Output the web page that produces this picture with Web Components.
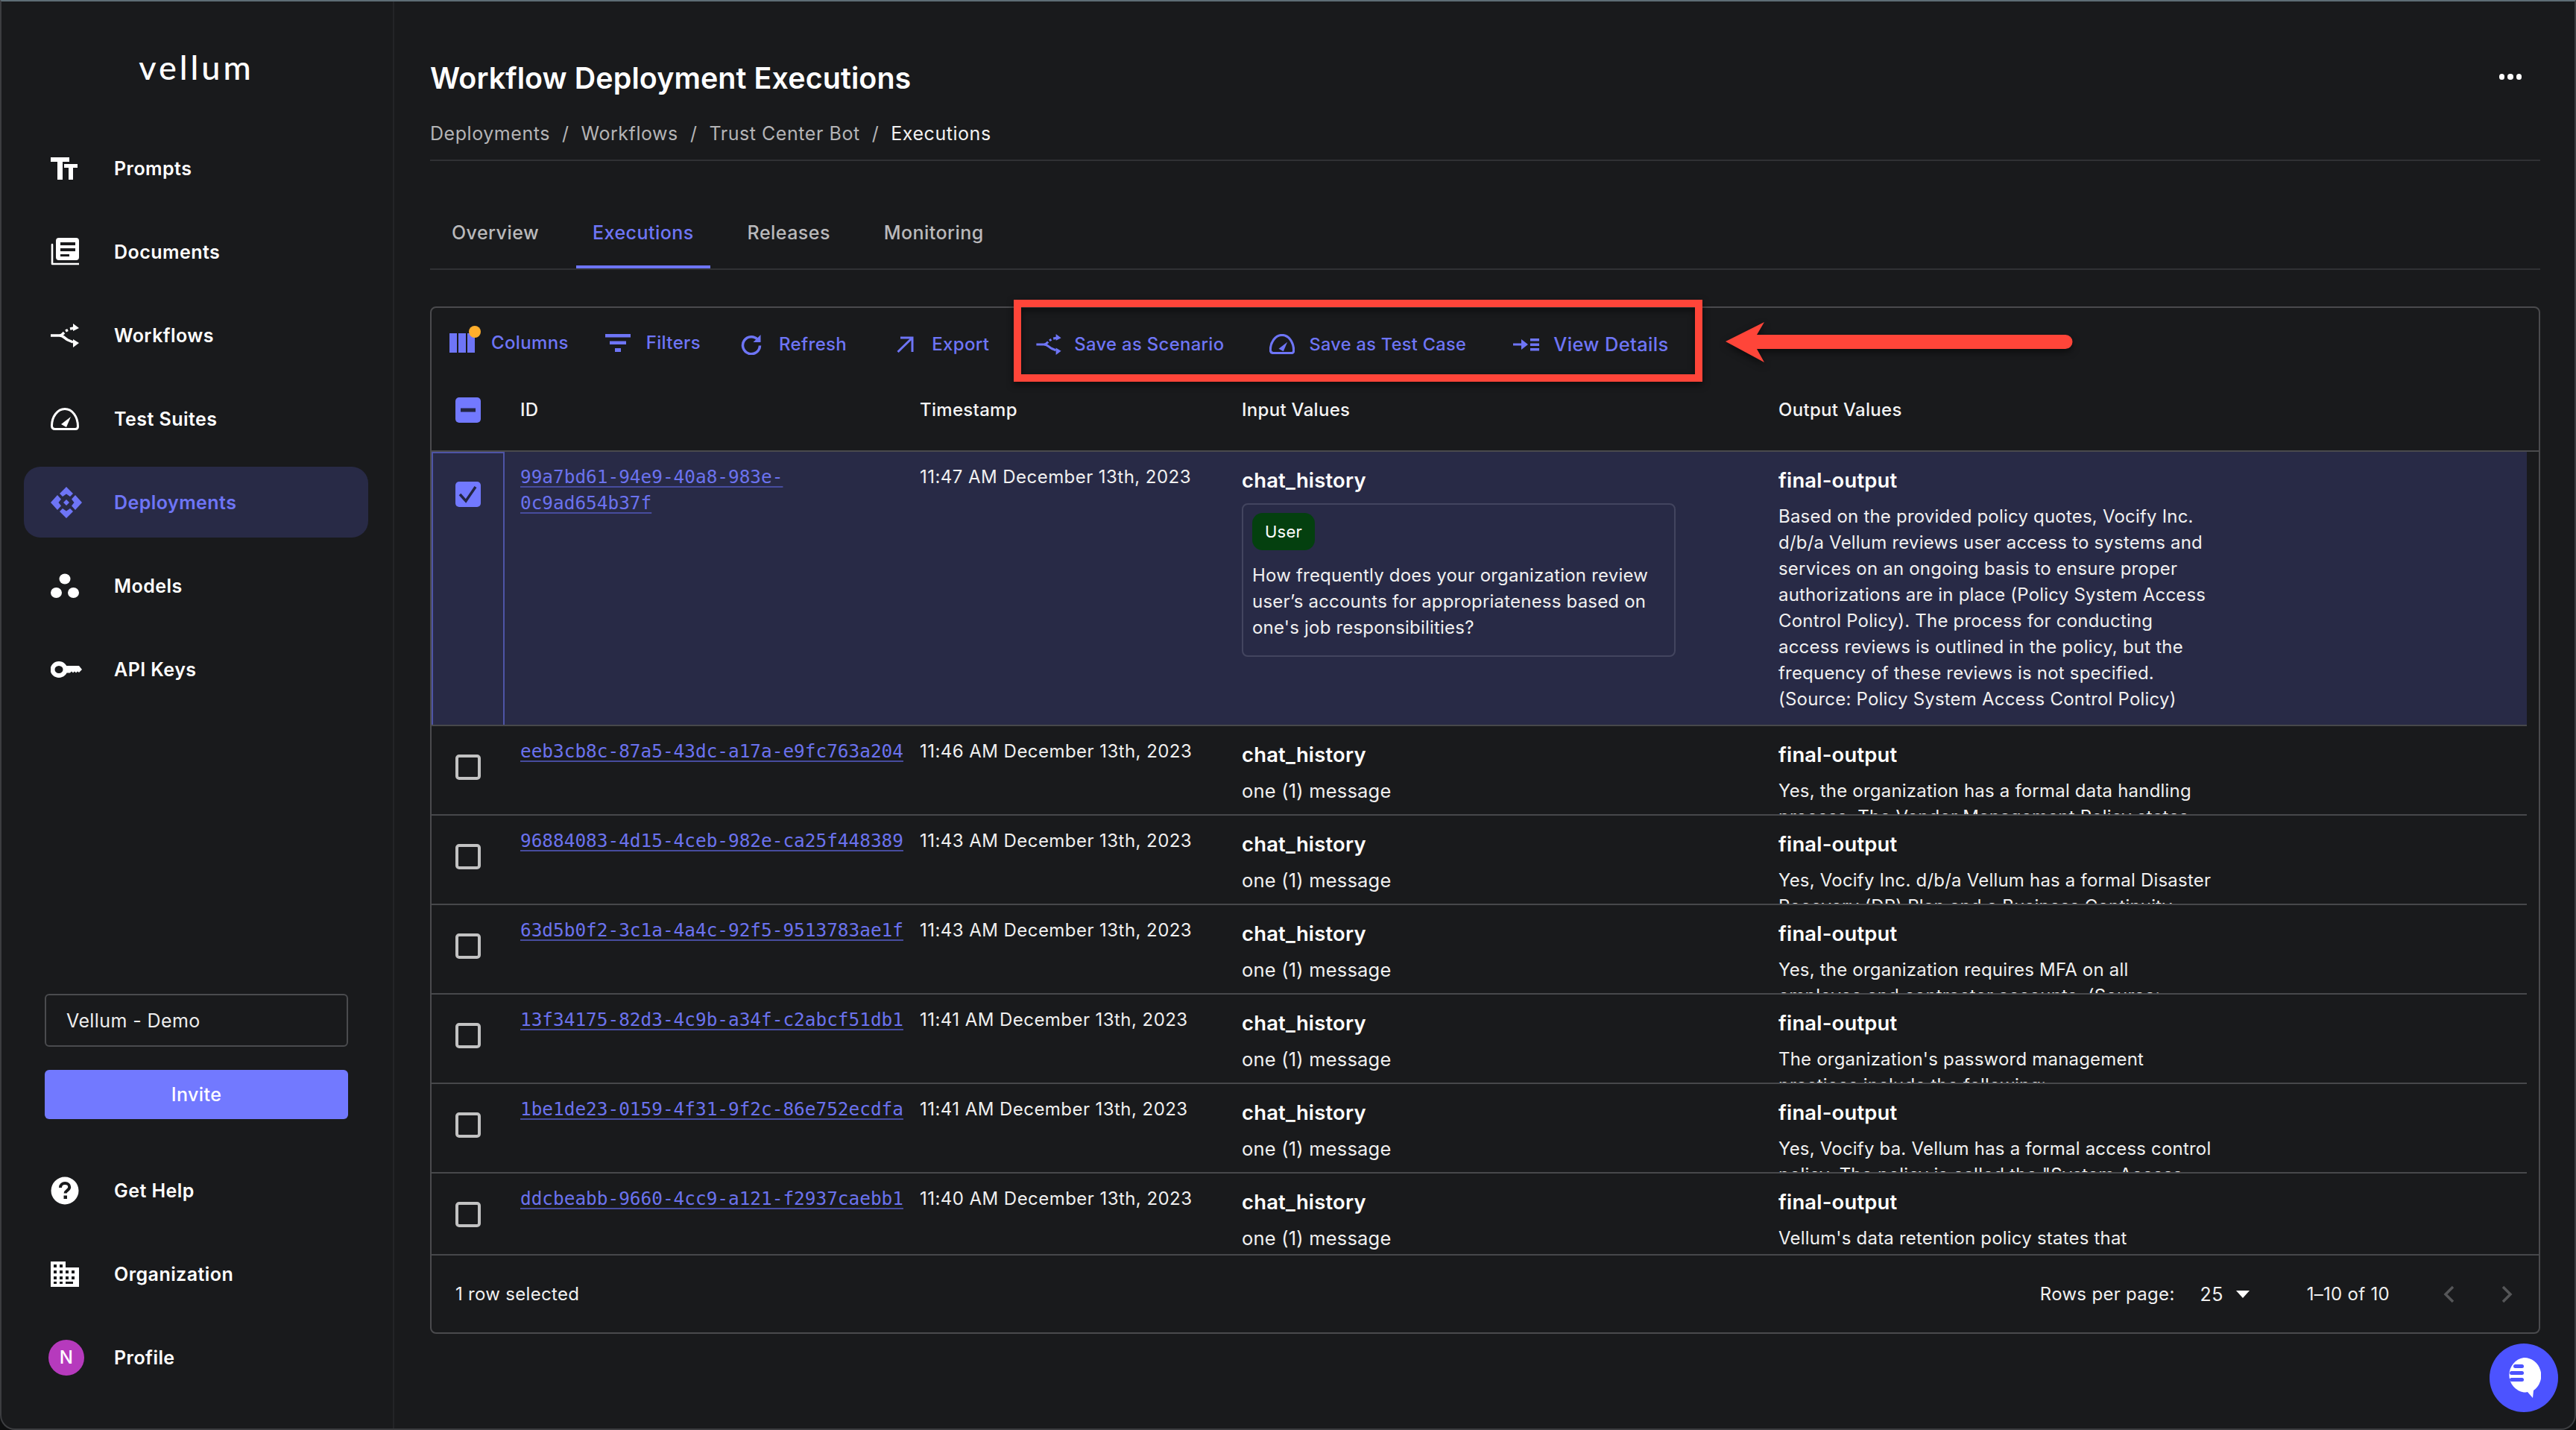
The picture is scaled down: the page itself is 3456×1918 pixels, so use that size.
<!DOCTYPE html>
<html>
<head>
<meta charset="utf-8">
<title>Workflow Deployment Executions</title>
<style>
  html, body { margin: 0; height: 100%; background: #0e0f10; }
  body { font-family: Inter, "Noto Sans", sans-serif; color: #fff; }
  svg { display: block; }
</style>
</head>
<body>
<app-shell>
  <side-nav slot="side">
    <nav-item slot="top" label="Prompts">
      <svg width="36" height="30" viewBox="0 0 36 30" fill="currentColor"><path d="M0 0h25v6h-9v24H9V6H0zM18 9h18v5h-6v16h-6V14h-6z"/></svg>
    </nav-item>
    <nav-item slot="top" label="Documents">
      <svg width="38" height="37" viewBox="0 0 38 37"><path d="M2 9v26h36" fill="none" stroke="currentColor" stroke-width="2.6" stroke-linecap="round" stroke-linejoin="round"/><path fill="currentColor" fill-rule="evenodd" d="M11 0h23a4 4 0 0 1 4 4v22a4 4 0 0 1-4 4H11a4 4 0 0 1-4-4V4a4 4 0 0 1 4-4zm2 6v4h20V6zm0 8v4h20v-4zm0 8v3h12v-3z"/></svg>
    </nav-item>
    <nav-item slot="top" label="Workflows">
      <svg width="38" height="32" viewBox="0 0 38 32" fill="none" stroke="currentColor" stroke-width="3.500"><path d="M0 16h12c5 0 7 4 11 6l7 3"/><path d="M12 16c3 0 4-2 6-4"/><path d="M20 10l3-1.500M26 7l5-1"/><path d="M30 0l8 6-8 4zM30 21l8 5-8 6z" fill="currentColor" stroke="none"/></svg>
    </nav-item>
    <nav-item slot="top" label="Test Suites">
      <svg width="38" height="30" viewBox="0 0 38 30" fill="none" stroke="currentColor" stroke-width="3"><path d="M6 28.500h27c2 0 3.500-1 3.500-3.500C36.500 12 29 1.500 19 1.500S1.500 12 1.500 24c0 3 2 4.500 4.500 4.500z"/><path d="M14 22l13-10-6 14z" fill="currentColor" stroke="none"/></svg>
    </nav-item>
    <nav-item slot="top" label="Deployments" active>
      <svg width="42" height="42" viewBox="0 0 42 42" fill="currentColor"><path d="M21 0l9 9-4 4-5-3.500L16 13l-4-4zM0 21l9-10 5 5.500-3.500 4.500 3.500 4.500L9 31zM42 21l-9-10-5 5.500 3.500 4.500-3.500 4.500 5 5.500zM21 42l9-9-4-4-5 3.500L16 29l-4 4zM21 17l4 4-4 4-4-4z"/></svg>
    </nav-item>
    <nav-item slot="top" label="Models">
      <svg width="38" height="34" viewBox="0 0 38 34" fill="currentColor"><ellipse cx="19" cy="7.500" rx="7.500" ry="7"/><ellipse cx="7.500" cy="26" rx="7.500" ry="7"/><ellipse cx="30.500" cy="26" rx="7.500" ry="7"/></svg>
    </nav-item>
    <nav-item slot="top" label="API Keys">
      <svg width="42" height="24" viewBox="0 0 42 24"><ellipse cx="11" cy="12" rx="8.500" ry="8" fill="none" stroke="currentColor" stroke-width="6"/><path fill="currentColor" d="M18 7h20l4 5-4 4-2-1.500-2 2-2-2-2 2-2-2-2 2h-8z"/></svg>
    </nav-item>

    <org-select slot="bottom">Vellum - Demo</org-select>
    <invite-button slot="bottom">Invite</invite-button>
    <nav-item slot="bottom" label="Get Help">
      <svg width="38" height="38" viewBox="0 0 38 38"><circle cx="19" cy="19" r="18.500" fill="currentColor"/><path d="M13 15c0-4 3-6 6.200-6 3.600 0 6 2.300 6 5.200 0 4.300-5.600 4.300-5.600 8.300" fill="none" stroke="#191a1c" stroke-width="4"/><rect x="17.500" y="25.500" width="4.500" height="4.500" fill="#191a1c"/></svg>
    </nav-item>
    <nav-item slot="bottom" label="Organization">
      <svg width="38" height="34" viewBox="0 0 38 34" fill="currentColor" fill-rule="evenodd"><path d="M0 0h20v8h18v26H0zM4 4v4h4V4zm8 0v4h4V4zM4 12v4h4v-4zm8 0v4h4v-4zm8 0v4h4v-4zm8 0v4h4v-4zM4 20v4h4v-4zm8 0v4h4v-4zm8 0v4h4v-4zm8 0v4h4v-4zM4 27v3h4v-3zm8 0v3h4v-3zm8 0v3h10v-3z"/></svg>
    </nav-item>
    <nav-item slot="bottom" label="Profile">
      <user-avatar>N</user-avatar>
    </nav-item>
  </side-nav>

  <page-head slot="main" title-text="Workflow Deployment Executions" trail="Deployments|Workflows|Trust Center Bot|Executions"></page-head>
  <tab-bar slot="main" tabs="Overview|Executions|Releases|Monitoring" current="Executions"></tab-bar>

  <data-card slot="main">
    <tool-btn slot="tools" lift gap="22">
      <svg slot="icon" width="42" height="36" viewBox="0 0 42 36" style="margin:-10px -8px 0 0"><path fill="currentColor" d="M0 10h10v26H0zM12 10h10v26H12zM24 10h10v26H24z"/><circle cx="34" cy="8" r="8" fill="#ffae2c"/></svg>
      Columns
    </tool-btn>
    <tool-btn slot="tools" lift lead="49" gap="21">
      <svg slot="icon" width="34" height="24" viewBox="0 0 34 24" fill="currentColor"><path d="M0 0h34v4.500H0zM6 9.500h22V14H6zM13 19h8v5h-8z"/></svg>
      Filters
    </tool-btn>
    <tool-btn slot="tools" lead="54" gap="23">
      <svg slot="icon" width="28" height="28" viewBox="0 0 28 28" fill="none" stroke="currentColor" stroke-width="3.500"><path d="M23 8a11.500 11.500 0 1 0 2.500 7.500"/><path d="M26.500 1v10h-10z" fill="currentColor" stroke="none"/></svg>
      Refresh
    </tool-btn>
    <tool-btn slot="tools" lead="67" gap="24">
      <svg slot="icon" width="23" height="22" viewBox="0 0 23 22" fill="none" stroke="currentColor" stroke-width="3"><path d="M5 2h16v19M20.500 2.500L1.500 21"/></svg>
      Export
    </tool-btn>
    <tool-btn slot="tools" lead="63" gap="17" style="font-size:23.800px">
      <svg slot="icon" width="34" height="28" viewBox="0 0 38 32" fill="none" stroke="currentColor" stroke-width="3.500"><path d="M0 16h12c5 0 7 4 11 6l7 3"/><path d="M12 16c3 0 4-2 6-4"/><path d="M20 10l3-1.500M26 7l5-1"/><path d="M30 0l8 6-8 4zM30 21l8 5-8 6z" fill="currentColor" stroke="none"/></svg>
      Save as Scenario
    </tool-btn>
    <tool-btn slot="tools" lead="61" gap="19" style="font-size:23.500px">
      <svg slot="icon" width="34" height="27" viewBox="0 0 38 30" fill="none" stroke="currentColor" stroke-width="3.500"><path d="M6 28.500h27c2 0 3.500-1 3.500-3.500C36.500 12 29 1.500 19 1.500S1.500 12 1.500 24c0 3 2 4.500 4.500 4.500z"/><path d="M14 22l13-10-6 14z" fill="currentColor" stroke="none"/></svg>
      Save as Test Case
    </tool-btn>
    <tool-btn slot="tools" lead="63" gap="19" style="font-size:25.500px">
      <svg slot="icon" width="35" height="18" viewBox="0 0 35 18" fill="currentColor"><path d="M0 7.500h11V2l9 7-9 7v-5.500H0zM23 1h12v3.500H23zM23 7.500h12V11H23zM23 14h12v3.500H23z"/></svg>
      View Details
    </tool-btn>

    <table-head slot="head"></table-head>

    <exec-row slot="rows" selected uuid="99a7bd61-94e9-40a8-983e-&#10;0c9ad654b37f" time="11:47 AM December 13th, 2023"
      output="Based on the provided policy quotes, Vocify Inc.&#10;d/b/a Vellum reviews user access to systems and&#10;services on an ongoing basis to ensure proper&#10;authorizations are in place (Policy System Access&#10;Control Policy). The process for conducting&#10;access reviews is outlined in the policy, but the&#10;frequency of these reviews is not specified.&#10;(Source: Policy System Access Control Policy)">
      <chat-bubble role-name="User">How frequently does your organization review user’s accounts for appropriateness based on one's job responsibilities?</chat-bubble>
    </exec-row>
    <exec-row slot="rows" uuid="eeb3cb8c-87a5-43dc-a17a-e9fc763a204" time="11:46 AM December 13th, 2023"
      output="Yes, the organization has a formal data handling&#10;process. The Vendor Management Policy states"></exec-row>
    <exec-row slot="rows" uuid="96884083-4d15-4ceb-982e-ca25f448389" time="11:43 AM December 13th, 2023"
      output="Yes, Vocify Inc. d/b/a Vellum has a formal Disaster&#10;Recovery (DR) Plan and a Business Continuity"></exec-row>
    <exec-row slot="rows" uuid="63d5b0f2-3c1a-4a4c-92f5-9513783ae1f" time="11:43 AM December 13th, 2023"
      output="Yes, the organization requires MFA on all&#10;employee and contractor accounts. (Source:"></exec-row>
    <exec-row slot="rows" uuid="13f34175-82d3-4c9b-a34f-c2abcf51db1" time="11:41 AM December 13th, 2023"
      output="The organization's password management&#10;practices include the following:"></exec-row>
    <exec-row slot="rows" uuid="1be1de23-0159-4f31-9f2c-86e752ecdfa" time="11:41 AM December 13th, 2023"
      output="Yes, Vocify ba. Vellum has a formal access control&#10;policy. The policy is called the &quot;System Access"></exec-row>
    <exec-row slot="rows" uuid="ddcbeabb-9660-4cc9-a121-f2937caebb1" time="11:40 AM December 13th, 2023"
      output="Vellum's data retention policy states that"></exec-row>

    <table-foot slot="foot"></table-foot>
  </data-card>

  <call-out slot="over"></call-out>
  <chat-fab slot="over"></chat-fab>
</app-shell>

<script>
(function () {
  // small helper so each component stays a few lines
  function define(name, css, html, extra) {
    class C extends HTMLElement {
      constructor() {
        super();
        this.attachShadow({ mode: "open" });
      }
      connectedCallback() {
        const body = typeof html === "function" ? html(this) : html;
        this.shadowRoot.innerHTML = `<style>${css}</style>${body}`;
        if (extra) extra(this);
      }
    }
    customElements.define(name, C);
  }

  define("app-shell", `
    :host { display: grid; grid-template-columns: 529px 1fr; grid-template-rows: minmax(0, 1fr); width: 3456px; height: 1918px; box-sizing: border-box;
      position: relative; background: #191a1c; border-top: 2px solid #5e6d76; border-left: 2px solid #3c3d40;
      border-right: 2px solid #3c3d40; border-bottom: 2px solid #3c3d40; border-radius: 0 0 20px 20px; overflow: hidden; }
    .main { display: flex; flex-direction: column; min-width: 0; min-height: 0; padding: 0 46px 127px 46px; }
  `, `<slot name="side"></slot><div class="main"><slot name="main"></slot></div><slot name="over"></slot>`);

  define("side-nav", `
    :host { display: flex; flex-direction: column; width: 527px; height: 100%; box-sizing: border-box;
      border-right: 2px solid #232427; padding-bottom: 48px; }
    .logo { height: 176px; box-sizing: border-box; padding: 53px 0 0 0; text-align: center; font: 500 45px/70px Lato, sans-serif;
      letter-spacing: 4px; color: #fff; margin-left: -2px; }
    .top { display: flex; flex-direction: column; gap: 17px; }
    .bottom { margin-top: auto; display: flex; flex-direction: column; gap: 17px; }
  `, `<div class="logo">vellum</div>
      <div class="top"><slot name="top"></slot></div>
      <div class="bottom"><slot name="bottom"></slot></div>`);

  define("nav-item", `
    :host { display: flex; align-items: center; height: 95px; box-sizing: border-box; margin: 0 33px 0 30px; border-radius: 22px;
      padding-left: 36px; color: #fff; font: 600 25px Inter, sans-serif; letter-spacing: .45px; }
    :host([active]) { background: #282a46; color: #6e75f6; }
    .ico { width: 85px; flex: none; display: flex; }
  `, (el) => `<span class="ico"><slot></slot></span><span>${el.getAttribute("label")}</span>`);

  define("user-avatar", `
    :host { display: flex; align-items: center; justify-content: center; width: 48px; height: 48px; border-radius: 50%;
      background: #b63abd; color: #fff; font: 500 24px Inter, sans-serif; margin-left: -3px; }
  `, `<slot></slot>`);

  define("org-select", `
    :host { display: flex; align-items: center; height: 71px; box-sizing: border-box; margin: 0 60px 14px 58px; padding-left: 27px;
      border: 2px solid #4a4b4e; border-radius: 6px; font: 400 25px Inter, sans-serif; letter-spacing: .4px; color: #eee; }
  `, `<slot></slot>`);

  define("invite-button", `
    :host { display: flex; align-items: center; justify-content: center; height: 66px; margin: 0 60px 31px 58px; border-radius: 6px;
      background: #7279ff; color: #fff; font: 500 25px Inter, sans-serif; letter-spacing: .4px; }
  `, `<slot></slot>`);

  define("page-head", `
    :host { display: block; height: 214px; box-sizing: border-box; border-bottom: 2px solid #303134; }
    .head { display: flex; justify-content: space-between; padding-top: 76px; height: 160px; box-sizing: border-box; }
    .t { margin: 0; font: 600 39.400px/54px Inter, sans-serif; color: #fff; letter-spacing: .1px; }
    .crumbs { display: flex; font: 400 25px/34px Inter, sans-serif; color: #b4b4b6; letter-spacing: .55px; }
    .sep { margin: 0 16px; }
    .cur { color: #f2f2f2; }
    .dots { display: flex; gap: 4px; margin: 21px 25px 0 0; }
    .dots i { width: 7.500px; height: 7.500px; border-radius: 50%; background: #fff; }
  `, (el) => {
    const parts = el.getAttribute("trail").split("|");
    const crumbs = parts.map((p, i) =>
      i === parts.length - 1 ? `<span class="cur">${p}</span>` : `<span>${p}</span><span class="sep">/</span>`
    ).join("");
    return `<div class="head"><div class="t">${el.getAttribute("title-text")}</div>
      <div class="dots"><i></i><i></i><i></i></div></div><div class="crumbs">${crumbs}</div>`;
  });

  define("tab-bar", `
    :host { display: flex; height: 146px; box-sizing: border-box; align-items: flex-end; padding-left: 7px; gap: 28px; border-bottom: 2px solid #303134; flex: none; }
    .t { height: 96px; box-sizing: border-box; padding: 0 22px; display: flex; align-items: center; font: 500 25px Inter, sans-serif;
      color: #b9b9bb; letter-spacing: .45px; }
    .t.on { color: #6e75f6; border-bottom: 4px solid #6e75f6; padding-top: 4px; }
  `, (el) => el.getAttribute("tabs").split("|").map((t) =>
    `<div class="t ${t === el.getAttribute("current") ? "on" : ""}">${t}</div>`).join(""));

  define("data-card", `
    :host { display: flex; flex-direction: column; flex: 1; min-height: 0; margin-top: 49px; box-sizing: border-box;
      border: 2px solid #4a4a4d; border-radius: 8px; }
    .tools { display: flex; align-items: center; height: 99px; padding-left: 24px; flex: none; }
    .rows { flex: 1; min-height: 0; overflow: hidden; padding-right: 16px; }
  `, `<div class="tools"><slot name="tools"></slot></div><slot name="head"></slot>
      <div class="rows"><slot name="rows"></slot></div><slot name="foot"></slot>`);

  define("tool-btn", `
    :host { display: flex; align-items: center; color: #6e75f6; font: 500 24px Inter, sans-serif; letter-spacing: .35px; white-space: nowrap; padding-bottom: 2px; }
    :host([lift]) { padding-bottom: 6px; }
  `, `<slot name="icon"></slot><span class="txt"><slot></slot></span>`, (el) => {
    el.style.marginLeft = (el.getAttribute("lead") || 0) + "px";
    el.shadowRoot.querySelector(".txt").style.marginLeft = (el.getAttribute("gap") || 20) + "px";
  });

  const gridCols = "98px 557px 432px 720px 1fr";

  define("check-box", `
    :host { display: block; width: 34px; height: 34px; }
    .box { width: 34px; height: 34px; box-sizing: border-box; border-radius: 5px; display: flex; align-items: center; justify-content: center; }
    .off { border: 4px solid #c2c2c2; }
    .on { background: #7279ff; }
  `, (el) => {
    const st = el.getAttribute("state");
    if (st === "check") return `<div class="box on"><svg width="26" height="26" viewBox="0 0 26 26" fill="none" stroke="#232544" stroke-width="3.500"><path d="M2 13l8 9L23 3"/></svg></div>`;
    if (st === "minus") return `<div class="box on"><svg width="20" height="6" viewBox="0 0 20 6"><rect width="20" height="5" y=".5" fill="#232544"/></svg></div>`;
    return `<div class="box off"></div>`;
  });

  define("table-head", `
    :host { display: grid; grid-template-columns: ${gridCols}; height: 92px; align-items: start; border-bottom: 2px solid #4a4a4d;
      font: 500 24px/34px Inter, sans-serif; letter-spacing: .3px; color: #f4f4f4; flex: none; }
    div { padding-top: 21px; }
    .c { justify-self: center; }
    .id { padding-left: 21px; }
  `, `<div class="c"><check-box state="minus"></check-box></div><div class="id">ID</div><div>Timestamp</div><div>Input Values</div><div>Output Values</div>`);

  define("exec-row", `
    :host { display: grid; grid-template-columns: ${gridCols}; height: 120px; box-sizing: border-box; border-bottom: 2px solid #47484b;
      overflow: hidden; font: 400 24px/35px Inter, sans-serif; letter-spacing: .2px; color: #f0f0f0; }
    :host([selected]) { height: 368px; background: #282a46; }
    .c { display: flex; justify-content: center; padding-top: 38px; box-sizing: border-box; }
    :host([selected]) .c { border: 2px solid #4e54a6; margin-bottom: -2px; padding-top: 38px; }
    a { font: 400 24.400px/35px "DejaVu Sans Mono", monospace; letter-spacing: 0; color: #6b72ee; white-space: pre-line;
      text-decoration: underline; text-decoration-color: #474c9e; text-decoration-thickness: 2px; text-underline-offset: 4px; }
    .id { padding: 16px 0 0 21px; }
    .ts { padding-top: 16px; letter-spacing: .45px; }
    .in, .out { padding-top: 21px; }
    b { display: block; font: 600 27.400px/35px Inter, sans-serif; letter-spacing: .2px; color: #fff; }
    .msg { margin-top: 13px; font-size: 25.500px; }
    p { margin: 13px 0 0; white-space: pre; font-size: 24px; }
    ::slotted(chat-bubble) { margin-top: 13px; }
  `, (el) => {
    const sel = el.hasAttribute("selected");
    const input = sel ? `<slot></slot>` : `<div class="msg">one (1) message</div>`;
    return `<div class="c"><check-box state="${sel ? "check" : "off"}"></check-box></div>
      <div class="id"><a>${el.getAttribute("uuid")}</a></div>
      <div class="ts">${el.getAttribute("time")}</div>
      <div class="in"><b>chat_history</b>${input}</div>
      <div class="out"><b>final-output</b><p>${el.getAttribute("output")}</p></div>`;
  });

  define("chat-bubble", `
    :host { display: block; width: 582px; height: 206px; box-sizing: border-box; border: 2px solid #43455f; border-radius: 8px; padding: 11px 12px 0 12px; }
    .chip { display: inline-flex; align-items: center; height: 50px; padding: 0 17px; border-radius: 14px; background: #04400f; color: #fff; font-size: 22px; }
    .txt { margin-top: 16px; }
  `, (el) => `<div class="chip">${el.getAttribute("role-name")}</div><div class="txt"><slot></slot></div>`);

  define("table-foot", `
    :host { display: flex; align-items: center; height: 103px; flex: none; border-top: 2px solid #47484b; padding: 0 35px 0 32px;
      font: 400 24px Inter, sans-serif; letter-spacing: .3px; color: #f0f0f0; }
    .grow { flex: 1; }
    .num { margin-left: 34px; font-size: 25px; }
    .tri { margin-left: 17px; width: 0; height: 0; border-left: 9.500px solid transparent; border-right: 9.500px solid transparent; border-top: 10px solid #fff; }
    .range { margin-left: 77px; }
    svg.p { margin-left: 72px; }
    svg.n { margin-left: 63px; }
  `, `<span>1 row selected</span><span class="grow"></span><span>Rows per page:</span><span class="num">25</span><span class="tri"></span>
      <span class="range">1–10 of 10</span>
      <svg class="p" width="15" height="24" viewBox="0 0 15 24" fill="none" stroke="#555658" stroke-width="3.500"><path d="M13 2L3 12l10 10"/></svg>
      <svg class="n" width="15" height="24" viewBox="0 0 15 24" fill="none" stroke="#555658" stroke-width="3.500"><path d="M2 2l10 10L2 22"/></svg>`);

  define("call-out", `
    :host { position: absolute; left: 1358px; top: 400px; display: block; width: 1430px; height: 110px; filter: drop-shadow(0 4px 5px rgba(0,0,0,.55)); pointer-events: none; }
    .box { position: absolute; left: 0; top: 0; width: 924px; height: 110px; box-sizing: border-box; border: 10px solid #ff4539; }
    svg { position: absolute; left: 955px; top: 30px; }
  `, `<div class="box"></div>
      <svg width="470" height="54" viewBox="0 0 470 54"><path fill="#ff4539" d="M0 26L52 0 42 17H456a9.500 9.500 0 0 1 0 19H42L52 54z"/></svg>`);

  define("chat-fab", `
    :host { position: absolute; right: 22px; bottom: 22px; width: 92px; height: 92px; border-radius: 50%; background: #4c53ff; display: flex; align-items: center; justify-content: center; }
  `, `<svg width="46" height="54" viewBox="0 0 46 54"><path fill="#fff" d="M23 0a23 24 0 0 1 13 44l-1 10-7-8a23 23 0 0 1-5 .5A23 23.500 0 0 1 23 0z"/><g fill="#4c53ff"><rect x="9" y="9" width="14" height="5" rx="2.500"/><rect x="4" y="18" width="19" height="5" rx="2.500"/><rect x="4" y="27" width="19" height="5" rx="2.500"/></g></svg>`);
})();
</script>
</body>
</html>
